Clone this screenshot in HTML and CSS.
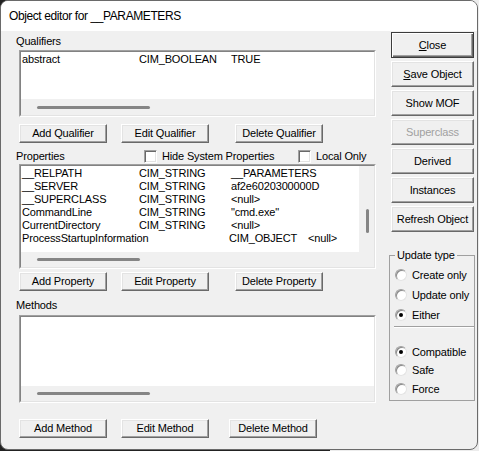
FILE: index.html
```html
<!DOCTYPE html>
<html lang="en">
<head>
  <meta charset="UTF-8" />
  <title>Object editor for __PARAMETERS</title>
  <link rel="stylesheet" href="styles.css">
</head>
<body>
  <div class="window">
    <div class="titlebar">Object editor for __PARAMETERS</div>

    <div class="client">
      <div class="left">
        <div class="label first">Qualifiers</div>
        <div class="list qual-list">
          <div class="list-inner">
            <div class="list-main">
              <div class="rows">
                <div class="row"><span>abstract</span><span>CIM_BOOLEAN</span><span>TRUE</span></div>
              </div>
            </div>
            <div class="hscroll"><div class="hthumb"></div></div>
          </div>
        </div>
        <div class="btn-row">
          <button class="btn">Add Qualifier</button>
          <button class="btn">Edit Qualifier</button>
          <button class="btn del">Delete Qualifier</button>
        </div>

        <div class="prop-head">
          <div class="prop-label">Properties</div>
          <label class="check hide-sys"><span class="box"></span>Hide System Properties</label>
          <label class="check"><span class="box"></span>Local Only</label>
        </div>
        <div class="list prop-list">
          <div class="list-inner">
            <div class="list-main">
              <div class="rows">
                <div class="row"><span>__RELPATH</span><span>CIM_STRING</span><span>__PARAMETERS</span></div>
                <div class="row"><span>__SERVER</span><span>CIM_STRING</span><span>af2e6020300000D</span></div>
                <div class="row"><span>__SUPERCLASS</span><span>CIM_STRING</span><span>&lt;null&gt;</span></div>
                <div class="row"><span>CommandLine</span><span>CIM_STRING</span><span>"cmd.exe"</span></div>
                <div class="row"><span>CurrentDirectory</span><span>CIM_STRING</span><span>&lt;null&gt;</span></div>
                <div class="row wide"><span>ProcessStartupInformation</span><span>CIM_OBJECT</span><span>&lt;null&gt;</span></div>
              </div>
              <div class="vscroll"><div class="vthumb"></div></div>
            </div>
            <div class="hscroll"><div class="hthumb short"></div></div>
          </div>
        </div>
        <div class="btn-row tight">
          <button class="btn">Add Property</button>
          <button class="btn">Edit Property</button>
          <button class="btn del">Delete Property</button>
        </div>

        <div class="label methods">Methods</div>
        <div class="list meth-list">
          <div class="list-inner">
            <div class="list-main">
              <div class="rows"></div>
            </div>
            <div class="hscroll"><div class="hthumb"></div></div>
          </div>
        </div>
        <div class="btn-row bottom">
          <button class="btn">Add Method</button>
          <button class="btn">Edit Method</button>
          <button class="btn del-m">Delete Method</button>
        </div>
      </div>

      <div class="right">
        <button class="rbtn default"><u>C</u>lose</button>
        <button class="rbtn"><u>S</u>ave Object</button>
        <button class="rbtn">Show MOF</button>
        <button class="rbtn" disabled>Superclass</button>
        <button class="rbtn">Derived</button>
        <button class="rbtn">Instances</button>
        <button class="rbtn">Refresh Object</button>

        <fieldset class="group">
          <legend>Update type</legend>
          <label class="radio r-first"><span class="dot"></span>Create only</label>
          <label class="radio"><span class="dot"></span>Update only</label>
          <label class="radio"><span class="dot on"></span>Either</label>
          <div class="sep"></div>
          <label class="radio r-second"><span class="dot on"></span>Compatible</label>
          <label class="radio short"><span class="dot"></span>Safe</label>
          <label class="radio"><span class="dot"></span>Force</label>
        </fieldset>
      </div>
    </div>
  </div>
</body>
</html>
```

FILE: styles.css
```css
html, body {
  margin: 0;
}
body {
  width: 479px;
  height: 451px;
  overflow: hidden;
  background: linear-gradient(90deg, #222 0, #222 330px, #ececec 330px);
  font-family: "Liberation Sans", Arial, sans-serif;
  font-size: 11px;
  letter-spacing: -0.15px;
  color: #000;
}
.window {
  width: 478px;
  height: 450px;
  box-sizing: border-box;
  border: 1px solid #6a6a6a;
  border-radius: 8px;
  background: #f0f0f0;
  overflow: hidden;
}
.titlebar {
  height: 30px;
  line-height: 30px;
  padding-left: 8px;
  background: #fff;
  font-size: 12px;
  letter-spacing: -0.4px;
}
.client {
  display: flex;
  padding-left: 15px;
}
.left {
  width: 360px;
}
.right {
  width: 86px;
  margin-left: 13px;
}

/* labels */
.label {
  height: 13px;
  line-height: 13px;
}
.label.first {
  margin-top: 4px;
}
.label.methods {
  margin-top: 8px;
}

/* list views */
.list {
  width: 357px;
  margin: 2px 0 0 3px;
  box-sizing: border-box;
  border: 1px solid;
  border-color: #a0a0a0 #fff #fff #a0a0a0;
}
.list-inner {
  height: 100%;
  box-sizing: border-box;
  border: 1px solid;
  border-color: #828282 #e3e3e3 #e3e3e3 #828282;
  display: flex;
  flex-direction: column;
}
.qual-list { height: 67px; }
.prop-list { height: 105px; margin-top: 1px; }
.meth-list { height: 88px; margin-top: 3px; }
.list-main {
  flex: 1;
  display: flex;
  background: #fff;
}
.rows {
  flex: 1;
  padding: 1px 0 0 1px;
}
.row {
  display: grid;
  grid-template-columns: 117px 92px auto;
  height: 13px;
  line-height: 13px;
  white-space: nowrap;
}
.row.wide {
  grid-template-columns: 207px 79px auto;
}
.hscroll {
  height: 16px;
  background: #f0f0f0;
  display: flex;
  align-items: center;
}
.prop-list .hscroll,
.meth-list .hscroll {
  height: 15px;
}
.hthumb {
  width: 113px;
  height: 3px;
  margin-left: 16px;
  border-radius: 2px;
  background: #858585;
}
.hthumb.short {
  width: 103px;
}
.vscroll {
  width: 15px;
  background: #f0f0f0;
}
.vthumb {
  width: 3px;
  height: 24px;
  margin: 43px 0 0 7px;
  border-radius: 2px;
  background: #858585;
}

/* push buttons */
button {
  font-family: inherit;
  font-size: 11px;
  letter-spacing: -0.15px;
  color: #000;
  padding: 0;
  margin: 0;
  background: #f0f0f0;
  box-sizing: border-box;
  border: 1px solid;
  border-color: #fff #696969 #696969 #fff;
  box-shadow: inset -1px -1px #a0a0a0, inset 1px 1px #e3e3e3;
  border-radius: 0;
}
.btn-row {
  display: flex;
  margin: 7px 0 0 3px;
}
.btn-row.tight {
  margin-top: 3px;
}
.btn-row.bottom {
  margin-top: 16px;
}
.btn {
  width: 88px;
  height: 19px;
  line-height: 17px;
}
.btn + .btn {
  margin-left: 14px;
}
.btn.del {
  margin-left: 26px;
}
.btn.del-m {
  margin-left: 20px;
}

.rbtn {
  display: block;
  width: 83px;
  height: 26px;
  margin: 0 0 3px 2px;
}
.rbtn:first-child {
  margin-top: 1px;
}
.rbtn.default {
  border: 1px solid #3c3c3c;
  box-shadow: inset 1px 1px #fff, inset -1px -1px #696969, inset -2px -2px #a0a0a0;
}
.rbtn:disabled {
  color: #a0a0a0;
}

/* checkboxes */
.prop-head {
  display: flex;
  align-items: center;
  height: 13px;
  margin-top: 7px;
  line-height: 13px;
}
.prop-label {
  width: 128px;
}
.check {
  display: flex;
  align-items: center;
}
.check.hide-sys {
  width: 154px;
}
.box {
  width: 13px;
  height: 13px;
  box-sizing: border-box;
  margin-right: 5px;
  background: #fff;
  border: 1px solid;
  border-color: #a0a0a0 #fff #fff #a0a0a0;
  box-shadow: inset 1px 1px #696969, inset -1px -1px #e3e3e3;
}

/* update type group */
.group {
  margin: 17px 0 0 0;
  padding: 0 0 0 5px;
  height: 152px;
  box-sizing: border-box;
  border: 1px solid #a0a0a0;
}
.group legend {
  padding: 0 2px;
  line-height: 13px;
}
.radio {
  display: flex;
  align-items: center;
  height: 20px;
}
.radio.r-first {
  margin-top: 3px;
}
.radio.r-second {
  margin-top: 14px;
  height: 19px;
}
.radio.short {
  height: 18px;
}
.dot {
  position: relative;
  width: 12px;
  height: 12px;
  box-sizing: border-box;
  margin-right: 5px;
  border-radius: 50%;
  background: #fff;
  border: 1px solid;
  border-color: #a0a0a0 #e3e3e3 #e3e3e3 #a0a0a0;
  box-shadow: inset 1px 1px #8a8a8a;
}
.dot.on::after {
  content: "";
  position: absolute;
  left: 3px;
  top: 3px;
  width: 4px;
  height: 4px;
  border-radius: 50%;
  background: #000;
}
.sep {
  height: 1px;
  margin: 1px 0 0 -1px;
  background: #a0a0a0;
  border-bottom: 1px solid #fff;
}
```
